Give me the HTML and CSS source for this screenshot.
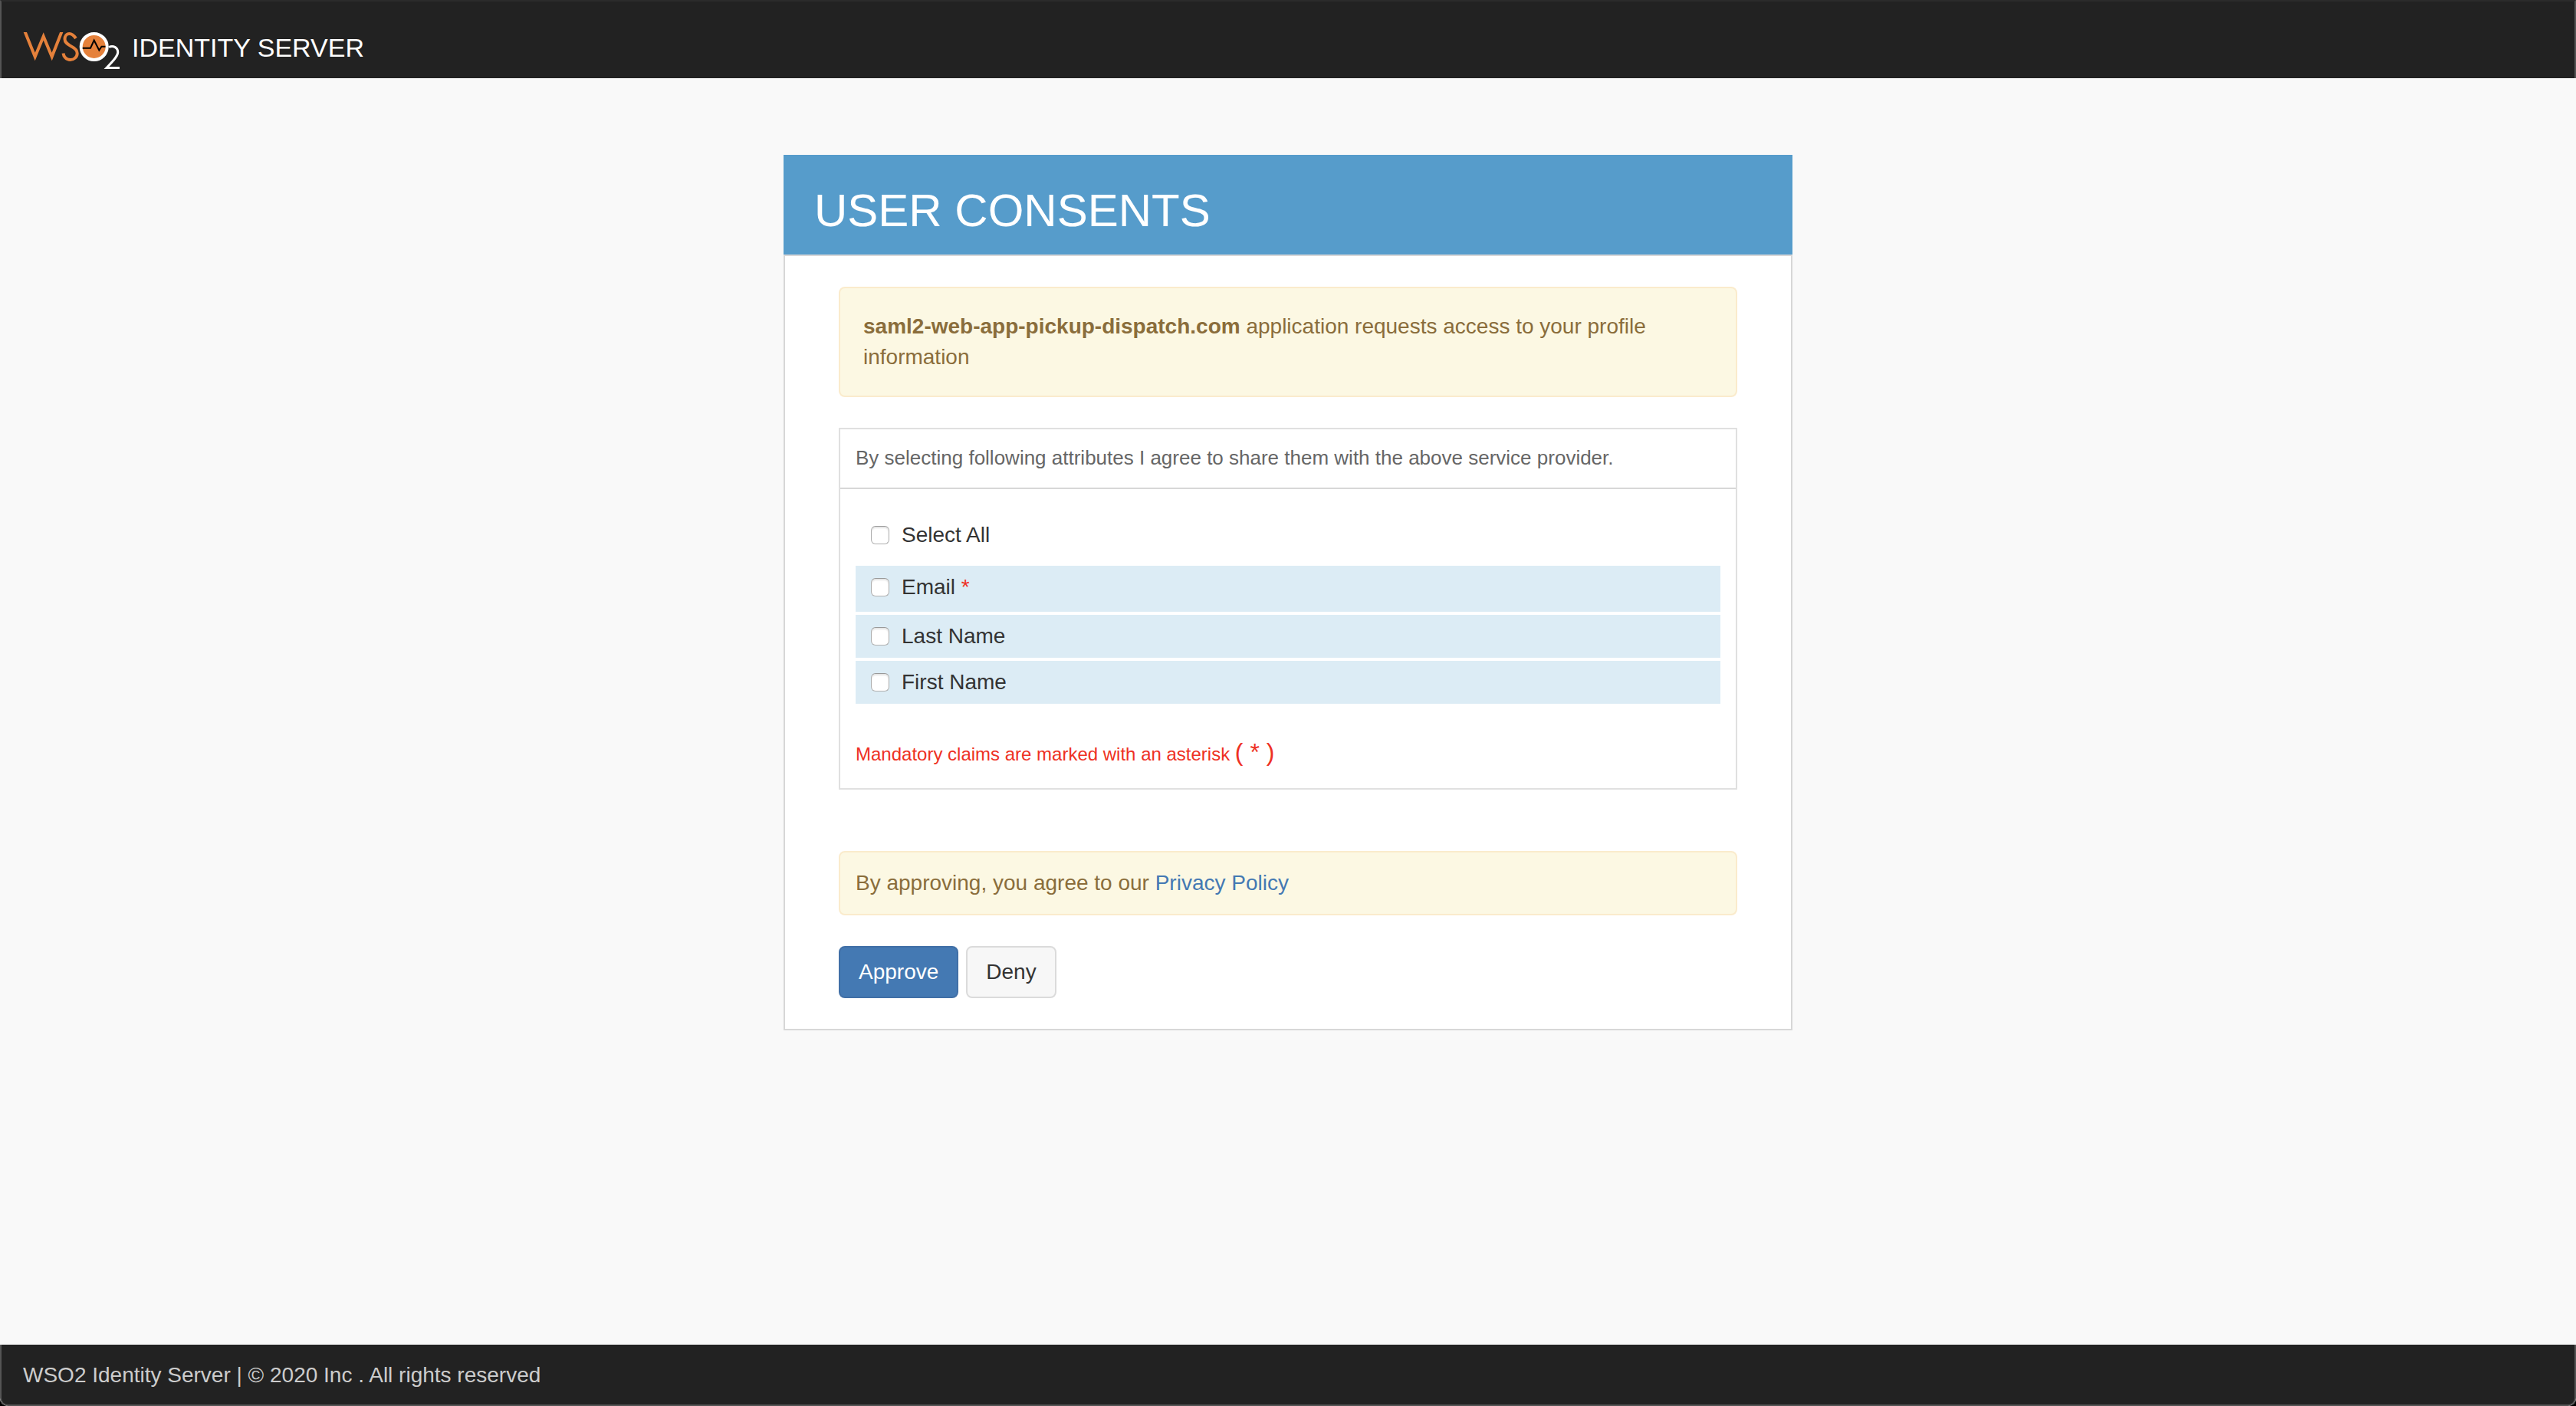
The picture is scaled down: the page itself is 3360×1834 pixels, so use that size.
FILE: index.html
```html
<!DOCTYPE html>
<html lang="en">
<head>
<meta charset="utf-8">
<meta name="viewport" content="width=device-width, initial-scale=1">
<title>WSO2 Identity Server</title>
<link rel="stylesheet" href="styles.css">
</head>
<body>
<header class="site-header">
  <a class="brand" href="#">
    <svg class="brand-logo" viewBox="0 0 126 48" role="img" aria-label="WSO2">
      <path class="logo-orange" d="M2 -2L15.700 32L26.700 5.500L37.700 32L51 -2"/>
      <path class="logo-orange" d="M69 8C66.500 4.500 64 2 60.500 2C56.500 2 54.500 5.500 54.500 9C54.500 14 59 16 63 18.500C68 21 70.700 23.500 70.700 27.500C70.700 32.500 66.500 36 61.500 36C56.500 36 53 32 52.500 27.500"/>
      <circle class="logo-ring" cx="92.700" cy="19" r="17"/>
      <path class="logo-pulse" d="M77.700 20.700H88L92.700 10.500L99.300 23.500L102.500 18.700H107.500"/>
      <path class="logo-two" d="M112 19.500C118 16.500 124 20.500 123.700 26.500C123.400 32 116 39 109 46.500H126"/>
    </svg>
    <span class="brand-name">IDENTITY SERVER</span>
  </a>
</header>
<main class="content">
  <form class="card">
    <h2 class="card-title">USER CONSENTS</h2>
    <div class="card-body">
      <p class="alert alert-request"><strong>saml2-web-app-pickup-dispatch.com</strong> application requests access to your profile information</p>
      <section class="claims">
        <p class="claims-intro">By selecting following attributes I agree to share them with the above service provider.</p>
        <div class="claims-body">
          <label class="claim claim-all"><input type="checkbox" class="check">Select All</label>
          <label class="claim claim-row claim-mandatory"><input type="checkbox" class="check"><span>Email <span class="required">*</span></span></label>
          <label class="claim claim-row"><input type="checkbox" class="check">Last Name</label>
          <label class="claim claim-row"><input type="checkbox" class="check">First Name</label>
          <p class="claims-note">Mandatory claims are marked with an asterisk <span class="mark">( * )</span></p>
        </div>
      </section>
      <p class="alert alert-policy">By approving, you agree to our <a class="link" href="#">Privacy Policy</a></p>
      <div class="actions">
        <button type="submit" class="btn btn-primary">Approve</button>
        <button type="button" class="btn">Deny</button>
      </div>
    </div>
  </form>
</main>
<footer class="site-footer">WSO2 Identity Server | © 2020 Inc . All rights reserved</footer>
</body>
</html>
```
FILE: styles.css
```css
* { box-sizing: border-box; }
html { background: #000; }
body {
  margin: 0;
  min-height: 100vh;
  display: flex;
  flex-direction: column;
  background: #f9f9f9;
  color: #333;
  font: 28px/40px "Liberation Sans", Arial, sans-serif;
  border-radius: 0 0 10px 10px;
  overflow: hidden;
}
p, h2 { margin: 0; font-weight: 400; }

.site-header {
  height: 102px;
  padding: 40px 28px 0;
  background: #222;
  border: 2px solid #555;
  border-width: 2px 2px 0;
  border-top-color: #2b2b2b;
}
.brand { display: inline-flex; gap: 16px; color: #fff; text-decoration: none; }
.brand-logo { width: 126px; height: 48px; fill: none; }
.logo-orange { stroke: #e5813b; stroke-width: 4; }
.logo-ring { fill: #e5813b; stroke: #fff; stroke-width: 4; }
.logo-pulse { stroke: #000; stroke-width: 2; }
.logo-two { stroke: #fff; stroke-width: 3; }
.brand-name { font-size: 34px; }

.content { flex: 1; padding: 100px 20px; }
.card { width: 100%; max-width: 1316px; margin: 0 auto; background: #fff; border: 2px solid #d7d7d7; border-top: 0; }
.card-title {
  margin: 0 -2px;
  padding: 38px 40px 22px;
  font-size: 60px;
  line-height: 70px;
  color: #fff;
  background: #569ccb;
}
.card-body { padding: 40px 70px; border-top: 2px solid #d7d7d7; }

.alert { color: #8a6d3b; background: #fcf8e3; border: 2px solid #faebcc; border-radius: 8px; }
.alert-request { padding: 30px; }
.alert-policy { padding: 20px; }

.claims { margin: 40px 0 80px; border: 2px solid #e0e0e0; }
.claims-intro { padding: 17px 20px 19px; font-size: 26px; color: #666; border-bottom: 2px solid #d7d7d7; }
.claims-body { padding: 40px 20px 24px; }
.claim { display: flex; align-items: center; gap: 16px; height: 56px; padding: 0 20px; }
.claim-all { height: 40px; margin-bottom: 20px; }
.claim-row { margin-bottom: 4px; background: #dcecf5; }
.claim-mandatory { height: 60px; padding-bottom: 4px; }
.required { color: #ee3124; }
.check {
  appearance: none;
  width: 24px;
  height: 24px;
  margin: 0;
  background: #fff;
  border: 1px solid #b0b0b0;
  border-top-color: #999;
  border-radius: 6px;
  box-shadow: inset 0 2px 2px #e4e4e4;
}
.claims-note { margin-top: 43px; font-size: 24px; color: #ee3124; }
.mark { font-size: 32px; }

.link { color: #4479b3; text-decoration: none; }
.actions { display: flex; gap: 10px; margin-top: 40px; }
.btn {
  height: 68px;
  padding: 0 24px;
  font: inherit;
  color: #333;
  background: #f7f7f7;
  border: 2px solid #dbdbdb;
  border-radius: 8px;
}
.btn-primary { color: #fff; background: #4479b3; border-color: #406fa6; }

.site-footer {
  height: 80px;
  padding: 20px 28px;
  color: #ccc;
  background: #222;
  border: 2px solid #555;
  border-top: 0;
  border-radius: 0 0 10px 10px;
}
```
